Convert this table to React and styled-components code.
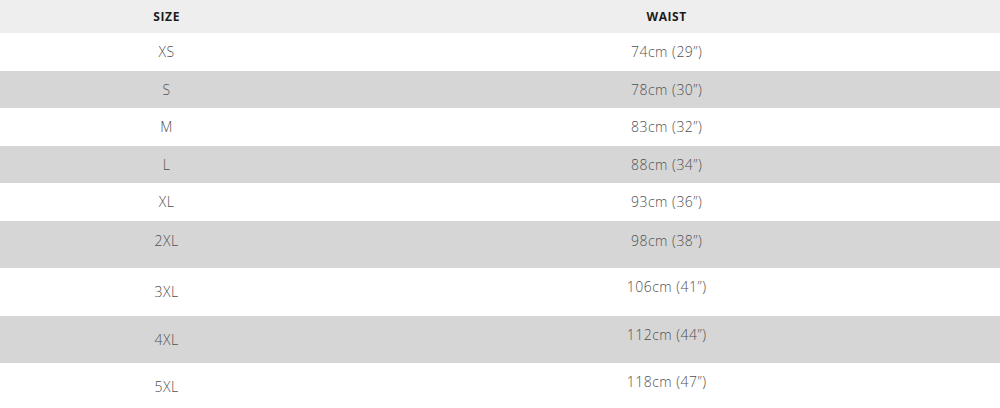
import React from "react";
import styled, { createGlobalStyle } from "styled-components";

const Global = createGlobalStyle`
  html, body { margin: 0; padding: 0; background: #ffffff; }
  body { font-family: "Open Sans", "Liberation Sans", sans-serif; }
`;

const Table = styled.div`
  display: flex;
  flex-direction: column;
  width: 1000px;
`;

const Row = styled.div`
  display: grid;
  grid-template-columns: 1fr 2fr;
  height: ${(p) => p.$h}px;
  background: ${(p) => (p.$shade ? "#d6d6d6" : "#ffffff")};
`;

const HeadRow = styled(Row)`
  height: 33px;
  background: #eeeeee;
`;

const HeadCell = styled.div`
  display: flex;
  align-items: center;
  justify-content: center;
  font-size: 12px;
  font-weight: 700;
  letter-spacing: 0.6px;
  color: #1c1c1c;
  text-transform: uppercase;
  padding-bottom: 1px;
`;

const Cell = styled.div`
  display: flex;
  align-items: center;
  justify-content: center;
  font-size: 14px;
  font-weight: 300;
  letter-spacing: 0.5px;
  color: #505050;
  padding-bottom: ${(p) => p.$lift || 0}px;
`;

const rows = [
  { size: "XS", waist: "74cm (29”)", h: 37.5 },
  { size: "S", waist: "78cm (30”)", h: 37.5 },
  { size: "M", waist: "83cm (32”)", h: 37.5 },
  { size: "L", waist: "88cm (34”)", h: 37.5 },
  { size: "XL", waist: "93cm (36”)", h: 37.5 },
  { size: "2XL", waist: "98cm (38”)", h: 47.5, liftSize: 8, liftWaist: 8 },
  { size: "3XL", waist: "106cm (41”)", h: 47.5, liftWaist: 10 },
  { size: "4XL", waist: "112cm (44”)", h: 47.5, liftWaist: 10 },
  { size: "5XL", waist: "118cm (47”)", h: 47.5, liftWaist: 10 },
];

export default function App() {
  return (
    <>
      <Global />
      <Table>
        <HeadRow>
          <HeadCell>Size</HeadCell>
          <HeadCell>Waist</HeadCell>
        </HeadRow>
        {rows.map((r, i) => (
          <Row key={r.size} $h={r.h} $shade={i % 2 === 1}>
            <Cell $lift={r.liftSize}>{r.size}</Cell>
            <Cell $lift={r.liftWaist}>{r.waist}</Cell>
          </Row>
        ))}
      </Table>
    </>
  );
}
